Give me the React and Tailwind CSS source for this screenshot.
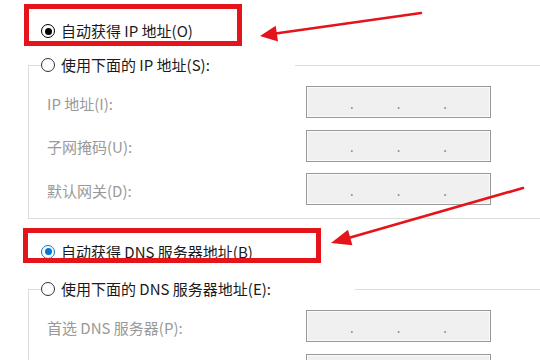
import React from 'react';

const FONT = "font-['Noto_Sans_CJK_SC','Noto_Sans',sans-serif]";

function Radio({ checked = false, color = '#000' }) {
    return (
        <span
            className="flex size-[14px] shrink-0 items-center justify-center rounded-full border bg-white"
            style={{ borderColor: checked ? color : '#333' }}
        >
            {checked && <span className="size-[7px] rounded-full" style={{ backgroundColor: color }} />}
        </span>
    );
}

function RadioRow({ label, checked, color, className = '' }) {
    return (
        <div className={`flex h-[20px] items-center gap-[6px] ${className}`}>
            <Radio checked={checked} color={color} />
            <span className="leading-[20px] whitespace-nowrap">{label}</span>
        </div>
    );
}

function IpBox() {
    return (
        <div className="flex h-[32px] w-[185px] items-center justify-evenly border border-[#999] bg-[#f0f0f0] shadow-[inset_0_0_0_1px_#fbfbfb] text-[13px] leading-none text-[#777]">
            <span className="mt-[2px]">.</span>
            <span className="mt-[2px]">.</span>
            <span className="mt-[2px]">.</span>
        </div>
    );
}

function FieldRow({ label }) {
    return (
        <div className="grid grid-cols-[259px_185px] items-center pl-[18px]">
            <span className="pt-[3px] leading-[20px] text-[#999]">{label}</span>
            <IpBox />
        </div>
    );
}

function Group({ legend, legendWidth, fields, className = '', bottom = true }) {
    return (
        <div className={`ml-[28px] w-[600px] border-l border-t border-[#dcdcdc] ${bottom ? 'border-b pb-[13px]' : ''} ${className}`}>
            <div className={`-mt-[11px] ml-[12px] bg-white ${legendWidth}`}>
                <RadioRow label={legend} />
            </div>
            <div className="mt-[11px] flex flex-col gap-[11.5px]">
                {fields.map((f) => (
                    <FieldRow key={f} label={f} />
                ))}
            </div>
        </div>
    );
}

function Annotations() {
    const red = '#e5141a';
    return (
        <svg className="pointer-events-none absolute inset-0" width="540" height="360" viewBox="0 0 540 360">
            <rect x="26.5" y="6.5" width="213" height="37" fill="none" stroke={red} strokeWidth="5" />
            <rect x="25.5" y="230.5" width="293" height="30" fill="none" stroke={red} strokeWidth="5" />
            <line x1="421" y1="13" x2="272" y2="34" stroke={red} strokeWidth="2.6" strokeLinecap="round" />
            <polygon points="260,36 278,41.5 275.7,25.7" fill={red} />
            <line x1="523" y1="188" x2="345" y2="239" stroke={red} strokeWidth="2.6" strokeLinecap="round" />
            <polygon points="331,243 352.4,245.2 348,229.8" fill={red} />
        </svg>
    );
}

export default function App() {
    return (
        <div className={`relative h-[360px] w-[540px] overflow-hidden bg-white text-[15px] text-[#1a1a1a] ${FONT}`}>
            <div className="pt-[21px]">
                <RadioRow className="pl-[41px]" label="自动获得 IP 地址(O)" checked />
            </div>

            <Group
                className="mt-[24px]"
                legend="使用下面的 IP 地址(S):"
                legendWidth="w-[254px]"
                fields={['IP 地址(I):', '子网掩码(U):', '默认网关(D):']}
            />

            <div className="pt-[22.5px]">
                <RadioRow className="pl-[41px]" label="自动获得 DNS 服务器地址(B)" checked color="#0078d7" />
            </div>

            <Group
                className="mt-[27.5px]"
                legend="使用下面的 DNS 服务器地址(E):"
                legendWidth="w-[314px]"
                fields={['首选 DNS 服务器(P):', '备用 DNS 服务器(A):']}
                bottom={false}
            />

            <Annotations />
        </div>
    );
}
